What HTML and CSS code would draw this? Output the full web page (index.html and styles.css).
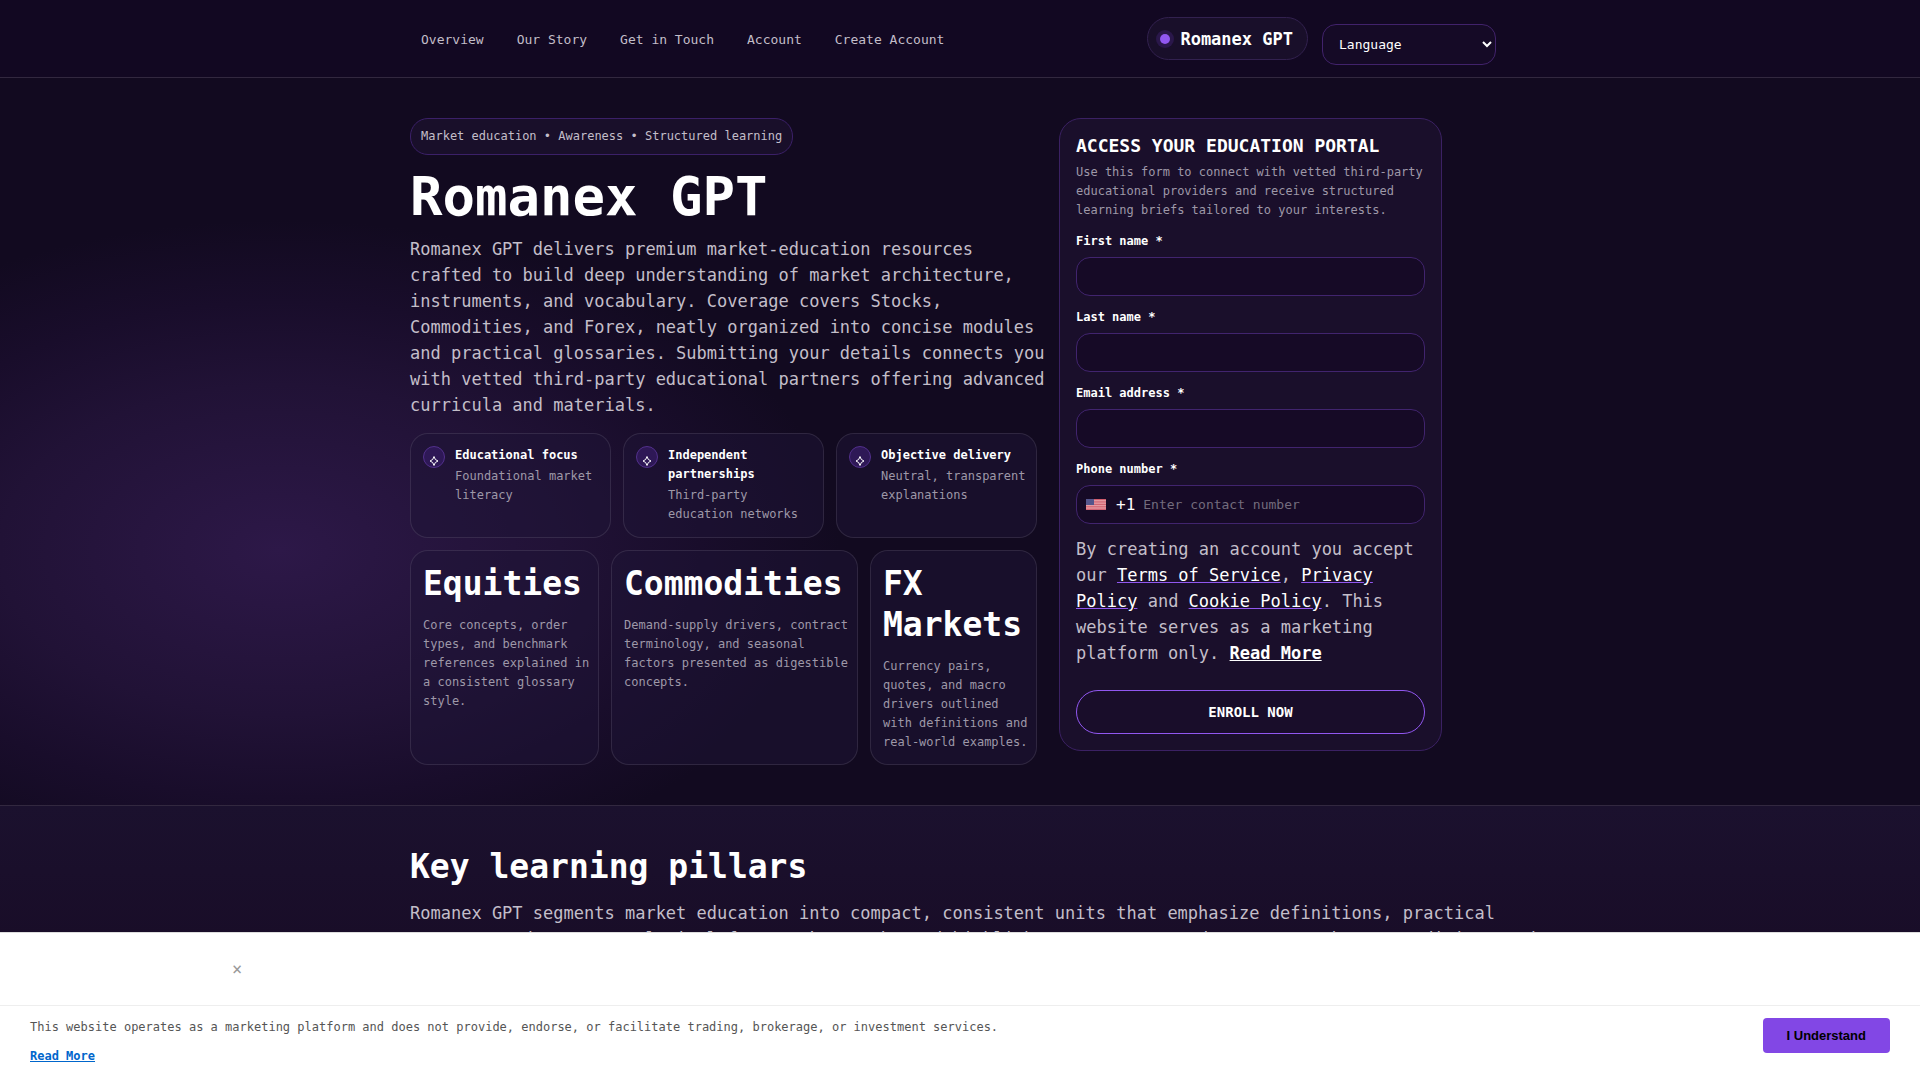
FILE: index.html
```html
<!DOCTYPE html>
<html lang="en">
<head>
    <meta charset="UTF-8">
    <meta name="viewport" content="width=device-width, initial-scale=1.0">
    <title>Romanex GPT</title>
    <link rel="stylesheet" href="styles.css">
</head>
<body>
    <header class="site-header">
        <div class="container header-inner">
            <nav class="nav">
                <a href="#overview">Overview</a>
                <a href="#story">Our Story</a>
                <a href="#contact">Get in Touch</a>
                <a href="#account">Account</a>
                <a href="#signup">Create Account</a>
            </nav>
            <a class="brand" href="#overview"><span class="brand-dot"></span>Romanex GPT</a>
            <select class="language" aria-label="Language">
                <option>Language</option>
                <option>English</option>
            </select>
        </div>
    </header>

    <main>
        <section class="hero" id="overview">
            <div class="container hero-grid">
                <div class="hero-copy">
                    <span class="pill">Market education • Awareness • Structured learning</span>
                    <h1>Romanex GPT</h1>
                    <p class="lead">Romanex GPT delivers premium market-education resources crafted to build deep understanding of market architecture, instruments, and vocabulary. Coverage covers Stocks, Commodities, and Forex, neatly organized into concise modules and practical glossaries. Submitting your details connects you with vetted third-party educational partners offering advanced curricula and materials.</p>

                    <div class="features">
                        <div class="feature">
                            <span class="feature-icon">
                                <svg viewBox="0 0 10 10"><path d="M5 .5 Q5.6 4.2 9 5 Q5.6 5.8 5 9.5 Q4.4 5.8 1 5 Q4.4 4.2 5 .5Z"/></svg>
                            </span>
                            <div>
                                <strong>Educational focus</strong>
                                <p>Foundational market literacy</p>
                            </div>
                        </div>
                        <div class="feature">
                            <span class="feature-icon">
                                <svg viewBox="0 0 10 10"><path d="M5 .5 Q5.6 4.2 9 5 Q5.6 5.8 5 9.5 Q4.4 5.8 1 5 Q4.4 4.2 5 .5Z"/></svg>
                            </span>
                            <div>
                                <strong>Independent partnerships</strong>
                                <p>Third-party education networks</p>
                            </div>
                        </div>
                        <div class="feature">
                            <span class="feature-icon">
                                <svg viewBox="0 0 10 10"><path d="M5 .5 Q5.6 4.2 9 5 Q5.6 5.8 5 9.5 Q4.4 5.8 1 5 Q4.4 4.2 5 .5Z"/></svg>
                            </span>
                            <div>
                                <strong>Objective delivery</strong>
                                <p>Neutral, transparent explanations</p>
                            </div>
                        </div>
                    </div>

                    <div class="markets">
                        <article class="market">
                            <h3>Equities</h3>
                            <p>Core concepts, order types, and benchmark references explained in a consistent glossary style.</p>
                        </article>
                        <article class="market">
                            <h3>Commodities</h3>
                            <p>Demand-supply drivers, contract terminology, and seasonal factors presented as digestible concepts.</p>
                        </article>
                        <article class="market">
                            <h3>FX Markets</h3>
                            <p>Currency pairs, quotes, and macro drivers outlined with definitions and real-world examples.</p>
                        </article>
                    </div>
                </div>

                <form class="signup" id="signup">
                    <h2>ACCESS YOUR EDUCATION PORTAL</h2>
                    <p class="signup-note">Use this form to connect with vetted third-party educational providers and receive structured learning briefs tailored to your interests.</p>
                    <div class="field">
                        <label for="first-name">First name *</label>
                        <input type="text" id="first-name">
                    </div>
                    <div class="field">
                        <label for="last-name">Last name *</label>
                        <input type="text" id="last-name">
                    </div>
                    <div class="field">
                        <label for="email">Email address *</label>
                        <input type="email" id="email">
                    </div>
                    <div class="field">
                        <label for="phone">Phone number *</label>
                        <div class="phone">
                            <svg class="flag" viewBox="0 0 20 11">
                                <rect width="20" height="11" fill="#f0b4b8"/>
                                <path d="M0 .5H20M0 2.2H20M0 3.9H20M0 5.6H20M0 7.3H20M0 9H20M0 10.6H20" stroke="#cc5464" stroke-width=".9"/>
                                <rect width="8" height="6" fill="#54568c"/>
                            </svg>
                            <span class="dial-code">+1</span>
                            <input type="tel" id="phone" placeholder="Enter contact number">
                        </div>
                    </div>
                    <p class="terms">By creating an account you accept our <a href="#terms">Terms of Service</a>, <a href="#privacy">Privacy Policy</a> and <a href="#cookies">Cookie Policy</a>. This website serves as a marketing platform only. <a class="more" href="#more">Read More</a></p>
                    <button class="enroll" type="submit">ENROLL NOW</button>
                </form>
            </div>
        </section>

        <section class="pillars">
            <div class="container">
                <h2>Key learning pillars</h2>
                <p>Romanex GPT segments market education into compact, consistent units that emphasize definitions, practical context, and common analytical frameworks. Each card highlights components and covers Stocks, Commodities, and Forex.</p>
            </div>
        </section>
    </main>

    <aside class="notice">
        <div class="notice-top">
            <button class="notice-close" type="button" aria-label="Close">×</button>
        </div>
        <div class="notice-body">
            <div>
                <p>This website operates as a marketing platform and does not provide, endorse, or facilitate trading, brokerage, or investment services.</p>
                <a href="#more">Read More</a>
            </div>
            <button class="notice-accept" type="button">I Understand</button>
        </div>
    </aside>
</body>
</html>
```
FILE: styles.css
```css
* {
    margin: 0;
    padding: 0;
    box-sizing: border-box;
}

html {
    height: 100%;
    overflow: hidden;
}

body {
    height: 100%;
    overflow: hidden;
    font-family: "DejaVu Sans Mono", "Liberation Mono", monospace;
    font-size: 17px;
    line-height: 26px;
    color: #c3bec9;
    background: radial-gradient(ellipse 560px 330px at 280px 550px, #2d1848 0%, #211236 50%, #190d2b 75%, rgba(18, 10, 32, 0) 100%) #120a20;
}

input, select, button {
    font-family: inherit;
}

.container {
    max-width: 1100px;
    margin: 0 auto;
}

/* header */
.site-header {
    background: #120822;
    border-bottom: 1px solid #32283f;
}

.header-inner {
    display: flex;
    align-items: center;
    height: 77px;
    padding: 0 14px 0 11px;
}

.nav {
    display: flex;
    gap: 33px;
    margin-right: auto;
    padding-top: 2px;
}

.nav a {
    font-size: 13px;
    color: #c3bec9;
    text-decoration: none;
}

.brand {
    display: flex;
    align-items: center;
    gap: 10px;
    height: 43px;
    padding: 0 14px 0 12px;
    border: 1px solid #32214f;
    border-radius: 22px;
    background: #190f2a;
    font-size: 17px;
    font-weight: bold;
    color: #fff;
    text-decoration: none;
}

.brand-dot {
    width: 10px;
    height: 10px;
    border-radius: 50%;
    background: #9157f0;
    box-shadow: 0 0 0 4px #2a174a;
}

.language {
    width: 174px;
    height: 41px;
    margin: 12px 0 0 14px;
    padding: 0 12px;
    border: 1px solid #41226b;
    border-radius: 14px;
    background: #150a26;
    font-size: 13px;
    color: #fff;
}

/* hero */
.hero {
    padding: 40px 0;
}

.hero-grid {
    display: grid;
    grid-template-columns: minmax(0, 627px) minmax(0, 383px);
    gap: 22px;
    align-items: start;
}

.pill {
    display: inline-block;
    padding: 8px 10px;
    border: 1px solid #3b2068;
    border-radius: 18px;
    background: #190f2a;
    font-size: 12px;
    line-height: 19px;
}

h1 {
    margin-top: 12px;
    font-size: 54px;
    line-height: 60px;
    color: #fff;
}

.lead {
    width: 62ch;
    margin-top: 9px;
}

.features {
    display: grid;
    grid-template-columns: repeat(3, 1fr);
    gap: 12px;
    margin-top: 15px;
}

.feature,
.market {
    border: 1px solid rgba(255, 255, 255, 0.1);
    border-radius: 18px;
    background: rgba(30, 20, 54, 0.5);
    font-size: 12px;
    line-height: 19px;
    color: #9e98a8;
}

.feature {
    display: flex;
    align-items: flex-start;
    gap: 10px;
    min-height: 105px;
    padding: 12px 10px 12px 12px;
}

.feature strong {
    display: block;
    margin-bottom: 2px;
    color: #fff;
}

.feature-icon {
    display: flex;
    flex: none;
    justify-content: center;
    width: 22px;
    height: 22px;
    padding-top: 9px;
    border: 1px solid #52308c;
    border-radius: 50%;
    background: #2e1856;
}

.feature-icon svg {
    width: 10px;
    height: 10px;
    fill: none;
    stroke: #fff;
}

.markets {
    display: grid;
    grid-template-columns: 189fr 247fr 167fr;
    gap: 12px;
    margin-top: 12px;
}

.market {
    padding: 12px 8px 12px 12px;
}

.market h3 {
    margin-bottom: 12px;
    font-size: 33px;
    line-height: 41px;
    color: #fff;
}

/* sign up form */
.signup {
    padding: 16px;
    border: 1px solid #3b2163;
    border-radius: 22px;
    background: #1a0f2b;
}

.signup h2 {
    font-size: 18px;
    line-height: 22px;
    color: #fff;
}

.signup-note {
    margin: 6px 0 12px;
    font-size: 12px;
    line-height: 19px;
    color: #9e98a8;
}

.field {
    margin-bottom: 12px;
}

.field label {
    display: block;
    margin-bottom: 6px;
    font-size: 12px;
    line-height: 19px;
    font-weight: bold;
    color: #fff;
}

.field > input,
.phone {
    width: 100%;
    height: 39px;
    border: 1px solid #41246e;
    border-radius: 14px;
    background: #160a26;
    color: #fff;
}

.field > input {
    padding: 0 12px;
    font-size: 13px;
}

.phone {
    display: flex;
    align-items: center;
    padding: 0 9px;
}

.flag {
    width: 20px;
    height: 11px;
}

.dial-code {
    margin: 0 8px 0 10px;
    font-size: 16px;
}

.phone input {
    flex: 1;
    min-width: 0;
    border: 0;
    outline: 0;
    background: none;
    font-size: 13px;
    color: #fff;
}

.phone input::placeholder {
    color: #736c7d;
}

.terms a {
    color: #fff;
    text-decoration-color: #9157f0;
}

.terms .more {
    font-weight: bold;
    text-decoration-color: #fff;
}

.enroll {
    width: 100%;
    height: 44px;
    margin-top: 24px;
    border: 1px solid #9157f0;
    border-radius: 22px;
    background: #190d2a;
    font-size: 14px;
    font-weight: bold;
    color: #fff;
}

/* pillars */
.pillars {
    padding: 40px 0;
    border-top: 1px solid #32283f;
    background: linear-gradient(#1b112e, #190d28 130px);
}

.pillars h2 {
    margin-bottom: 13px;
    font-size: 33px;
    line-height: 41px;
    color: #fff;
}

.pillars p {
    width: 110ch;
}

/* notice bar */
.notice {
    position: fixed;
    right: 0;
    bottom: 0;
    left: 0;
    border-top: 1px solid #ddd;
    background: #fff;
}

.notice-top {
    height: 73px;
    padding: 22px 225px;
    border-bottom: 1px solid #eee;
}

.notice-close {
    width: 24px;
    height: 28px;
    border: 0;
    background: none;
    font-size: 17px;
    color: #999;
}

.notice-body {
    display: flex;
    justify-content: space-between;
    align-items: flex-start;
    padding: 12px 30px 14px;
    font-size: 12px;
    line-height: 19px;
    color: #555;
}

.notice-body p {
    margin-bottom: 10px;
}

.notice-body a {
    font-weight: bold;
    color: #0066cc;
}

.notice-accept {
    height: 35px;
    padding: 0 24px;
    border: 0;
    border-radius: 4px;
    background: #8247e5;
    font-family: "Liberation Sans", Arial, sans-serif;
    font-size: 13px;
    font-weight: bold;
    color: #000;
}
```
